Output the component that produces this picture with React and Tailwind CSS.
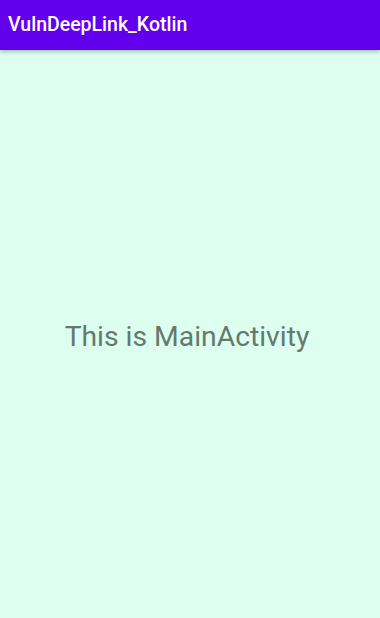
export default function App() {
  return (
    <div className="flex h-[618px] w-[380px] flex-col bg-[#dcfff0]" style={{ fontFamily: "Roboto, sans-serif" }}>
      <header className="relative z-10 flex h-[50px] items-center bg-[#6200ee] px-2 shadow-[0_2px_4px_rgba(0,0,0,0.25)]">
        <h1 className="text-[19.5px] font-medium text-white">VulnDeepLink_Kotlin</h1>
      </header>
      <main className="flex flex-1 items-center justify-center pt-[6px] pr-[6px]">
        <p className="text-[28.3px] text-[#65796e]">This is MainActivity</p>
      </main>
    </div>
  );
}
